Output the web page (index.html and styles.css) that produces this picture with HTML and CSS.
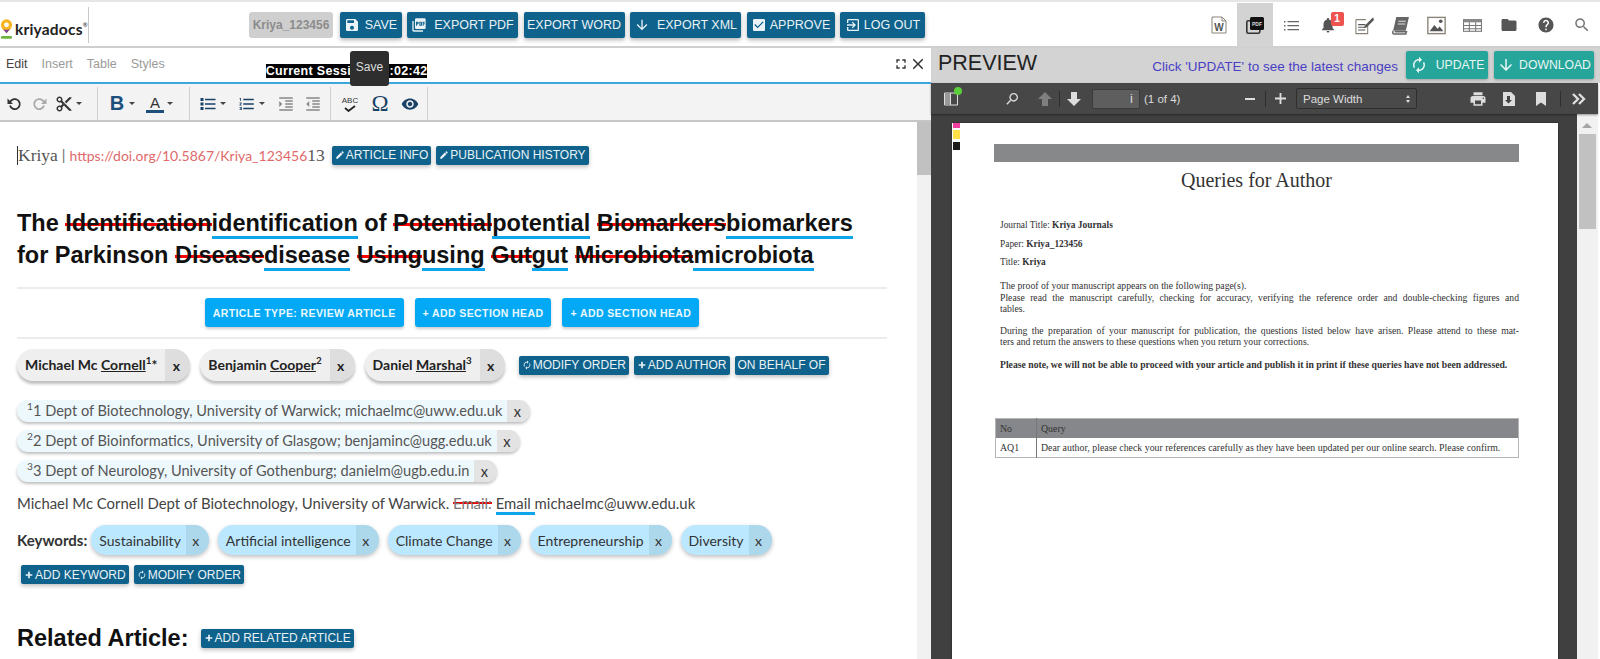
FILE: index.html
```html
<!DOCTYPE html>
<html lang="en">
<head>
<meta charset="utf-8">
<title>Kriyadocs editor</title>
<link rel="stylesheet" href="styles.css">
</head>
<body>
<svg class="sprite" aria-hidden="true">
  <symbol id="i-save" viewBox="0 0 24 24"><path d="M17 3H5c-1.11 0-2 .9-2 2v14c0 1.1.89 2 2 2h14c1.1 0 2-.9 2-2V7l-4-4zm-5 16c-1.66 0-3-1.34-3-3s1.34-3 3-3 3 1.34 3 3-1.34 3-3 3zm3-10H5V5h10v4z"/></symbol>
  <symbol id="i-pdf" viewBox="0 0 24 24"><path d="M20 2H8c-1.1 0-2 .9-2 2v12c0 1.1.9 2 2 2h12c1.1 0 2-.9 2-2V4c0-1.1-.9-2-2-2zm-8.5 7.5c0 .83-.67 1.5-1.5 1.5H9v2H7.5V7H10c.83 0 1.5.67 1.5 1.5v1zm5 2c0 .83-.67 1.5-1.5 1.5h-2.5V7H15c.83 0 1.5.67 1.5 1.5v3zm4-3H19v1h1.5V11H19v2h-1.5V7h3v1.5zM9 9.5h1v-1H9v1zM4 6H2v14c0 1.1.9 2 2 2h14v-2H4V6zm10 5.5h1v-3h-1v3z"/></symbol>
  <symbol id="i-down" viewBox="0 0 24 24"><path d="M20 12l-1.41-1.41L13 16.17V4h-2v12.17l-5.58-5.59L4 12l8 8 8-8z"/></symbol>
  <symbol id="i-check" viewBox="0 0 24 24"><path d="M19 3H5c-1.11 0-2 .9-2 2v14c0 1.1.89 2 2 2h14c1.11 0 2-.9 2-2V5c0-1.1-.89-2-2-2zm-9 14l-5-5 1.41-1.41L10 14.17l7.59-7.59L19 8l-9 9z"/></symbol>
  <symbol id="i-exit" viewBox="0 0 24 24"><path d="M10.09 15.59L11.5 17l5-5-5-5-1.41 1.41L12.67 11H3v2h9.67l-2.58 2.59zM19 3H5c-1.11 0-2 .9-2 2v4h2V5h14v14H5v-4H3v4c0 1.1.89 2 2 2h14c1.1 0 2-.9 2-2V5c0-1.1-.9-2-2-2z"/></symbol>
  <symbol id="i-loop" viewBox="0 0 24 24"><path d="M12 6v3l4-4-4-4v3c-4.42 0-8 3.58-8 8 0 1.57.46 3.03 1.24 4.26L6.7 14.8c-.45-.83-.7-1.79-.7-2.8 0-3.31 2.69-6 6-6zm6.76 1.74L17.3 9.2c.44.84.7 1.79.7 2.8 0 3.31-2.69 6-6 6v-3l-4 4 4 4v-3c4.42 0 8-3.58 8-8 0-1.57-.46-3.03-1.24-4.26z"/></symbol>
  <symbol id="i-edit" viewBox="0 0 24 24"><path d="M3 17.25V21h3.75L17.81 9.94l-3.75-3.75L3 17.25zM20.71 7.04c.39-.39.39-1.02 0-1.41l-2.34-2.34c-.39-.39-1.02-.39-1.41 0l-1.83 1.83 3.75 3.75 1.83-1.83z"/></symbol>
  <symbol id="i-add" viewBox="0 0 24 24"><path d="M20 14h-6v6h-4v-6H4v-4h6V4h4v6h6v4z"/></symbol>
  <symbol id="i-cut" viewBox="0 0 24 24"><path d="M9.64 7.64c.23-.5.36-1.05.36-1.64 0-2.21-1.79-4-4-4S2 3.79 2 6s1.79 4 4 4c.59 0 1.14-.13 1.64-.36L10 12l-2.36 2.36C7.14 14.13 6.59 14 6 14c-2.21 0-4 1.79-4 4s1.79 4 4 4 4-1.79 4-4c0-.59-.13-1.14-.36-1.64L12 14l7 7h3v-1L9.64 7.64zM6 8c-1.1 0-2-.89-2-2s.9-2 2-2 2 .89 2 2-.9 2-2 2zm0 12c-1.1 0-2-.89-2-2s.9-2 2-2 2 .89 2 2-.9 2-2 2zm6-7.5c-.28 0-.5-.22-.5-.5s.22-.5.5-.5.5.22.5.5-.22.5-.5.5zM19 3l-6 6 2 2 7-7V3z"/></symbol>
  <symbol id="i-ul" viewBox="0 0 24 24"><path d="M2 4h4v4H2zM2 10h4v4H2zM2 16h4v4H2zM8 5h14v2H8zM8 11h14v2H8zM8 17h14v2H8z"/></symbol>
  <symbol id="i-ol" viewBox="0 0 24 24"><path d="M2 17h2v.5H3v1h1v.5H2v1h3v-4H2v1zm1-9h1V4H2v1h1v3zm-1 3h1.8L2 13.1v.9h3v-1H3.2L5 10.9V10H2v1zm5-6v2h14V5H7zm0 14h14v-2H7v2zm0-6h14v-2H7v2z"/></symbol>
  <symbol id="i-indent" viewBox="0 0 24 24"><path d="M3 21h18v-2H3v2zM3 8v8l4-4-4-4zm8 9h10v-2H11v2zM3 3v2h18V3H3zm8 6h10V7H11v2zm0 4h10v-2H11v2z"/></symbol>
  <symbol id="i-outdent" viewBox="0 0 24 24"><path d="M11 17h10v-2H11v2zm-8-5l4 4V8l-4 4zm0 9h18v-2H3v2zM3 3v2h18V3H3zm8 6h10V7H11v2zm0 4h10v-2H11v2z"/></symbol>
  <symbol id="i-eye" viewBox="0 0 24 24"><path d="M12 4.5C7 4.5 2.73 7.61 1 12c1.73 4.39 6 7.5 11 7.5s9.27-3.11 11-7.5c-1.73-4.39-6-7.5-11-7.5zM12 17c-2.76 0-5-2.24-5-5s2.24-5 5-5 5 2.24 5 5-2.24 5-5 5zm0-8c-1.66 0-3 1.34-3 3s1.34 3 3 3 3-1.34 3-3-1.34-3-3-3z"/></symbol>
  <symbol id="i-bell" viewBox="0 0 24 24"><path d="M12 22c1.1 0 2-.9 2-2h-4c0 1.1.89 2 2 2zm6-6v-5c0-3.07-1.64-5.64-4.5-6.32V4c0-.83-.67-1.5-1.5-1.5s-1.5.67-1.5 1.5v.68C7.63 5.36 6 7.92 6 11v5l-2 2v1h16v-1l-2-2z"/></symbol>
  <symbol id="i-folder" viewBox="0 0 24 24"><path d="M10 4H4c-1.1 0-1.99.9-1.99 2L2 18c0 1.1.9 2 2 2h16c1.1 0 2-.9 2-2V8c0-1.1-.9-2-2-2h-8l-2-2z"/></symbol>
  <symbol id="i-help" viewBox="0 0 24 24"><path d="M12 2C6.48 2 2 6.48 2 12s4.48 10 10 10 10-4.48 10-10S17.52 2 12 2zm1 17h-2v-2h2v2zm2.07-7.75l-.9.92C13.45 12.9 13 13.5 13 15h-2v-.5c0-1.1.45-2.1 1.17-2.83l1.24-1.26c.37-.36.59-.86.59-1.41 0-1.1-.9-2-2-2s-2 .9-2 2H8c0-2.21 1.79-4 4-4s4 1.79 4 4c0 .88-.36 1.68-.93 2.25z"/></symbol>
  <symbol id="i-search" viewBox="0 0 24 24"><path d="M15.5 14h-.79l-.28-.27C15.41 12.59 16 11.11 16 9.5 16 5.91 13.09 3 9.5 3S3 5.91 3 9.5 5.91 16 9.5 16c1.61 0 3.09-.59 4.23-1.57l.27.28v.79l5 4.99L20.49 19l-4.99-5zm-6 0C7.01 14 5 11.99 5 9.5S7.01 5 9.5 5 14 7.01 14 9.5 11.99 14 9.5 14z"/></symbol>
  <symbol id="i-print" viewBox="0 0 24 24"><path d="M19 8H5c-1.66 0-3 1.34-3 3v6h4v4h12v-4h4v-6c0-1.66-1.34-3-3-3zm-3 11H8v-5h8v5zm3-7c-.55 0-1-.45-1-1s.45-1 1-1 1 .45 1 1-.45 1-1 1zm-1-9H6v4h12V3z"/></symbol>
  <symbol id="i-full" viewBox="0 0 24 24"><path d="M7 14H5v5h5v-2H7v-3zm-2-4h2V7h3V5H5v5zm12 7h-3v2h5v-5h-2v3zM14 5v2h3v3h2V5h-5z"/></symbol>
  <symbol id="i-close" viewBox="0 0 24 24"><path d="M19 6.41L17.59 5 12 10.59 6.41 5 5 6.41 10.59 12 5 17.59 6.41 19 12 13.41 17.59 19 19 17.59 13.41 12z"/></symbol>
</svg>

<div class="app">
  <div class="topstrip"></div>
  <header class="topbar">
    <div class="logo">
      <svg class="logo-pin" viewBox="0 0 14 24">
        <path d="M7 1a6 6 0 0 1 6 6c0 2-1 3.4-2 4.6L7 16 3 11.6C2 10.4 1 9 1 7a6 6 0 0 1 6-6z" fill="#f7b520"/>
        <path d="M2 10c1 1.6 3 2.4 5 2.4s4-.8 5-2.4l-5 6z" fill="#7b3fa0"/>
        <circle cx="7" cy="7" r="2.6" fill="#fff"/>
        <rect x="1" y="19" width="12" height="3" rx="1.5" fill="#6fb43f"/>
      </svg>
      <span class="logo-text">kriyadocs<sup class="logo-r">®</sup></span>
    </div>
    <div class="actions">
      <span class="idchip">Kriya_123456</span>
      <button class="btn btn-save"><svg class="ic16"><use href="#i-save"/></svg><span>SAVE</span></button>
      <button class="btn btn-pdf"><svg class="ic16"><use href="#i-pdf"/></svg><span>EXPORT PDF</span></button>
      <button class="btn btn-word"><span>EXPORT WORD</span></button>
      <button class="btn btn-xml"><svg class="ic16"><use href="#i-down"/></svg><span>EXPORT XML</span></button>
      <button class="btn btn-approve"><svg class="ic16"><use href="#i-check"/></svg><span>APPROVE</span></button>
      <button class="btn btn-logout"><svg class="ic16"><use href="#i-exit"/></svg><span>LOG OUT</span></button>
    </div>
    <nav class="navicons">
      <span class="nav nav-w"><svg class="doc-w" viewBox="0 0 16 18"><path d="M1 1h10l4 4v12H1z" fill="#fff" stroke="#8a8478"/><path d="M11 1v4h4" fill="none" stroke="#8a8478"/><text x="8" y="14.5" text-anchor="middle" class="doc-w-t">W</text></svg></span>
      <span class="nav nav-active"><svg class="pdf-stack" viewBox="0 0 18 17"><rect x="0.8" y="3.8" width="13" height="12.4" rx="1.5" fill="none" stroke="#333" stroke-width="1.6"/><rect x="4" y="0" width="14" height="13" rx="1.5" fill="#111"/><text x="11" y="9" text-anchor="middle" class="pdf-t">PDF</text></svg></span>
      <span class="nav"><svg class="listic" viewBox="0 0 15 11"><path d="M0 1h1.500v1.500H0zM0 5h1.500v1.500H0zM0 9h1.500v1.500H0zM3.500 1H15v1.300H3.500zM3.500 5H15v1.300H3.500zM3.500 9H15v1.300H3.500z"/></svg></span>
      <span class="nav nav-bell"><svg class="ic18 dim"><use href="#i-bell"/></svg><b class="badge">1</b></span>
      <span class="nav"><svg class="navsvg" viewBox="0 0 21 20"><path d="M1 3.500h11M1 3.500V19h13V9" fill="none" stroke="#8a8478" stroke-width="1.200"/><path d="M3.500 9h8M3.500 12h8M3.500 15h8" stroke="#555" stroke-width="1.200"/><path d="M20 1l-9 9-1 3 3-1 8-8z" fill="#555"/></svg></span>
      <span class="nav"><svg class="navsvg" viewBox="0 0 18 18"><path d="M5 1h12l-3 13H2z" fill="#666"/><path d="M2 14c-1 2 0 3 1 3h11l.6-2H3.500" fill="none" stroke="#666" stroke-width="1.400"/><path d="M7 5h7M6.500 7.500h7" stroke="#ddd"/></svg></span>
      <span class="nav"><svg class="navsvg" viewBox="0 0 18 17"><rect x="0.800" y="0.800" width="16.400" height="15.400" fill="#fff" stroke="#8a8478" stroke-width="1.300"/><path d="M2.500 14l4.500-6 3 3.500 2-2 3.500 4.500z" fill="#555"/><circle cx="13" cy="4.500" r="1.700" fill="#555"/></svg></span>
      <span class="nav"><svg class="navsvg" viewBox="0 0 18 12"><rect x="0.500" y="0.500" width="17" height="11" fill="#fff" stroke="#777"/><rect x="0.500" y="0.500" width="17" height="2.500" fill="#888"/><path d="M6 3v8.500M12 3v8.500M0.500 6h17M0.500 9h17" stroke="#777"/></svg></span>
      <span class="nav"><svg class="ic18 dim2"><use href="#i-folder"/></svg></span>
      <span class="nav"><svg class="ic18 dim2"><use href="#i-help"/></svg></span>
      <span class="nav"><svg class="ic18 dim3"><use href="#i-search"/></svg></span>
    </nav>
  </header>

  <main class="main">
    <section class="editor">
      <div class="tabs">
        <span class="tab tab-on">Edit</span>
        <span class="tab">Insert</span>
        <span class="tab">Table</span>
        <span class="tab">Styles</span>
        <span class="session">Current Session: 00:02:42</span>
        <span class="tabtools">
          <svg class="ic16"><use href="#i-full"/></svg>
          <svg class="ic18"><use href="#i-close"/></svg>
        </span>
        <div class="tooltip">Save</div>
      </div>

      <div class="toolbar">
        <div class="tgroup tg1">
          <span class="tool"><svg class="ic16" viewBox="0 0 16 16"><path d="M4 9.500a5 5 0 1 0 1.600-5.200L3 6.500" fill="none" stroke="#333" stroke-width="1.800"/><path d="M1.500 2.500v5.500H7z" fill="#333"/></svg></span>
          <span class="tool off"><svg class="ic16" viewBox="0 0 16 16"><path d="M12 9.500a5 5 0 1 1-1.600-5.200L13 6.500" fill="none" stroke="#aaa" stroke-width="1.800"/><path d="M14.500 2.500v5.500H9z" fill="#aaa"/></svg></span>
          <span class="tool tool-wide"><svg class="ic18"><use href="#i-cut"/></svg><i class="caret"></i></span>
        </div>
        <div class="tgroup tg2">
          <span class="tool tool-wide"><b class="tb">B</b><i class="caret"></i></span>
          <span class="tool tool-wide"><span class="ta">A</span><i class="caret"></i></span>
        </div>
        <div class="tgroup tg3">
          <span class="tool tool-wide w39"><svg class="ic18 navy"><use href="#i-ul"/></svg><i class="caret"></i></span>
          <span class="tool tool-wide w34"><svg class="ic18 navy"><use href="#i-ol"/></svg><i class="caret"></i></span>
          <span class="tool w27"><svg class="ic18 grey"><use href="#i-indent"/></svg></span>
          <span class="tool w27"><svg class="ic18 grey"><use href="#i-outdent"/></svg></span>
        </div>
        <div class="tgroup tg4">
          <span class="tool w30"><span class="abc"><small class="abc-t">ABC</small><svg class="abc-c" viewBox="0 0 12 7"><path d="M1 3l3.500 3L11 1" fill="none" stroke="#222" stroke-width="1.800"/></svg></span></span>
          <span class="tool w30"><span class="omega">Ω</span></span>
          <span class="tool w30"><svg class="ic18 navy"><use href="#i-eye"/></svg></span>
        </div>
      </div>

      <div class="docwrap">
        <div class="doc">
          <div class="docline">
            <span class="caretbar"></span><span class="serif">Kriya</span><span class="pipe">|</span><a class="doi">https://doi.org/10.5867/Kriya_123456</a><span class="serif">13</span>
            <button class="mini mini-info"><svg class="ic10"><use href="#i-edit"/></svg>ARTICLE INFO</button>
            <button class="mini"><svg class="ic10"><use href="#i-edit"/></svg>PUBLICATION HISTORY</button>
          </div>

          <h1 class="title">The <del>Identification</del><ins>identification</ins> of <del>Potential</del><ins>potential</ins> <del>Biomarkers</del><ins>biomarkers</ins> for Parkinson <del>Disease</del><ins>disease</ins> <del>Using</del><ins>using</ins> <del>Gut</del><ins>gut</ins> <del>Microbiota</del><ins>microbiota</ins></h1>

          <div class="sectionbtns">
            <button class="sb">ARTICLE TYPE: REVIEW ARTICLE</button>
            <button class="sb">+ ADD SECTION HEAD</button>
            <button class="sb">+ ADD SECTION HEAD</button>
          </div>

          <div class="authors">
            <span class="chip chip-author"><span class="chip-t">Michael Mc <u>Cornell</u><sup>1</sup>*</span><span class="chip-x">x</span></span>
            <span class="chip chip-author"><span class="chip-t">Benjamin <u>Cooper</u><sup>2</sup></span><span class="chip-x">x</span></span>
            <span class="chip chip-author"><span class="chip-t">Daniel <u>Marshal</u><sup>3</sup></span><span class="chip-x">x</span></span>
            <span class="minis">
              <button class="mini"><svg class="ic10"><use href="#i-loop"/></svg>MODIFY ORDER</button>
              <button class="mini"><svg class="ic10"><use href="#i-add"/></svg>ADD AUTHOR</button>
              <button class="mini">ON BEHALF OF</button>
            </span>
          </div>

          <div class="affs">
            <span class="chip chip-aff"><span class="chip-t"><sup>1</sup>1 Dept of Biotechnology, University of Warwick; michaelmc@uww.edu.uk</span><span class="chip-x">x</span></span>
            <span class="chip chip-aff"><span class="chip-t"><sup>2</sup>2 Dept of Bioinformatics, University of Glasgow; benjaminc@ugg.edu.uk</span><span class="chip-x">x</span></span>
            <span class="chip chip-aff"><span class="chip-t"><sup>3</sup>3 Dept of Neurology, University of Gothenburg; danielm@ugb.edu.in</span><span class="chip-x">x</span></span>
          </div>

          <p class="corr">Michael Mc Cornell Dept of Biotechnology, University of Warwick. <del class="thin">Email:</del> <ins class="thin">Email </ins>michaelmc@uww.edu.uk</p>

          <div class="keywords">
            <b class="kw-label">Keywords:</b>
            <span class="chip chip-kw"><span class="chip-t">Sustainability</span><span class="chip-x">x</span></span>
            <span class="chip chip-kw"><span class="chip-t">Artificial intelligence</span><span class="chip-x">x</span></span>
            <span class="chip chip-kw"><span class="chip-t">Climate Change</span><span class="chip-x">x</span></span>
            <span class="chip chip-kw"><span class="chip-t">Entrepreneurship</span><span class="chip-x">x</span></span>
            <span class="chip chip-kw"><span class="chip-t">Diversity</span><span class="chip-x">x</span></span>
          </div>

          <div class="kwbtns">
            <button class="mini"><svg class="ic10"><use href="#i-add"/></svg>ADD KEYWORD</button>
            <button class="mini"><svg class="ic10"><use href="#i-loop"/></svg>MODIFY ORDER</button>
          </div>

          <div class="related">
            <span class="rel-t">Related Article:</span>
            <button class="mini"><svg class="ic10"><use href="#i-add"/></svg>ADD RELATED ARTICLE</button>
          </div>
        </div>
        <div class="scroll-left"><div class="thumb-left"></div></div>
      </div>
    </section>

    <section class="preview">
      <div class="pv-head">
        <span class="pv-title">PREVIEW</span>
        <span class="pv-msg">Click 'UPDATE' to see the latest changes</span>
        <button class="teal teal-up"><svg class="ic18"><use href="#i-loop"/></svg><span>UPDATE</span></button>
        <button class="teal teal-dl"><svg class="ic18"><use href="#i-down"/></svg><span>DOWNLOAD</span></button>
      </div>
      <div class="pdfbar">
        <span class="sidebar-ic"><svg class="ic-side" viewBox="0 0 14 14"><path d="M0.500 1h13v12H0.500z" fill="none" stroke="#ddd"/><rect x="1" y="1.500" width="5" height="11" fill="#999"/><path d="M6.500 1v12" stroke="#ddd"/></svg><i class="greendot"></i></span>
        <svg class="ic16 pb-search light"><use href="#i-search"/></svg>
        <svg class="pb-arrow pb-up" viewBox="0 0 14 14"><path d="M7 0l7 7H10v7H4V7H0z"/></svg>
        <i class="pb-sep"></i>
        <svg class="pb-arrow pb-dn" viewBox="0 0 14 14"><path d="M7 14L0 7h4V0h6v7h4z"/></svg>
        <span class="pb-input">i</span>
        <span class="pb-count">(1 of 4)</span>
        <span class="pb-minus"></span>
        <i class="pb-sep sep-z"></i>
        <svg class="pb-plus" viewBox="0 0 12 12"><path d="M5 0h2v5h5v2H7v5H5V7H0V5h5z"/></svg>
        <span class="pb-select">Page Width<span class="updown"><i></i><i></i></span></span>
        <svg class="ic18 pb-print light"><use href="#i-print"/></svg>
        <svg class="pb-docdl" viewBox="0 0 12 14"><path d="M0 0h8l4 4v10H0z" fill="#ddd"/><path d="M4 4h3v4h2l-3.500 3.500L2 8h2z" fill="#444"/></svg>
        <svg class="pb-mark" viewBox="0 0 10 14"><path d="M0 0h10v14L5 10.500 0 14z" fill="#ddd"/></svg>
        <i class="pb-sep sep-r"></i>
        <svg class="pb-more" viewBox="0 0 14 12"><path d="M1 1l5 5-5 5M7 1l5 5-5 5" fill="none" stroke="#ddd" stroke-width="2.400"/></svg>
      </div>
      <div class="viewer">
        <div class="pages">
          <article class="page">
            <i class="mark mark-m"></i><i class="mark mark-y"></i><i class="mark mark-k"></i>
            <div class="greybar"></div>
            <h2 class="q-title">Queries for Author</h2>
            <p class="q-meta first">Journal Title: <b>Kriya Journals</b></p>
            <p class="q-meta">Paper: <b>Kriya_123456</b></p>
            <p class="q-meta">Title: <b>Kriya</b></p>
            <p class="q-p q-gap">The proof of your manuscript appears on the following page(s).</p>
            <p class="q-p"><span class="jl">Please read the manuscript carefully, checking for accuracy, verifying the reference order and double-checking figures and</span> tables.</p>
            <p class="q-p q-gap2"><span class="jl">During the preparation of your manuscript for publication, the questions listed below have arisen. Please attend to these mat-</span> ters and return the answers to these questions when you return your corrections.</p>
            <p class="q-p q-gap3"><b>Please note, we will not be able to proceed with your article and publish it in print if these queries have not been addressed.</b></p>
            <table class="q-table">
              <thead><tr><th class="c1">No</th><th>Query</th></tr></thead>
              <tbody><tr><td>AQ1</td><td>Dear author, please check your references carefully as they have been updated per our online search. Please confirm.</td></tr></tbody>
            </table>
          </article>
        </div>
        <div class="scroll-right"><i class="sc-up"></i><div class="thumb-right"></div></div>
      </div>
    </section>
  </main>
</div>
</body>
</html>
```

FILE: styles.css
```css
* { box-sizing: border-box; }
html, body { margin: 0; padding: 0; background: #fff; }
body { width: 1600px; height: 659px; overflow: hidden; font-family: "Liberation Sans", Arial, sans-serif; }
button { font-family: inherit; border: 0; cursor: pointer; }
svg { fill: currentColor; flex: none; }
.sprite { display: none; }
.app { display: flex; flex-direction: column; height: 659px; overflow: hidden; }

.topstrip { height: 5px; border-top: 2px solid #e6e6e6; background: #fff; }
.topbar { height: 43px; display: flex; align-items: flex-start; border-bottom: 2px solid #cfcfcf; background: #fff; }

.logo { width: 89px; height: 36px; margin-top: 2px; padding-top: 9px; display: flex; align-items: center; border-right: 1px solid #c8c8c8; gap: 2px; }
.logo-pin { width: 13px; height: 23px; }
.logo-text { font: 700 15.5px/1 "Lato", sans-serif; color: #222; letter-spacing: 0.2px; position: relative; }
.logo-r { font-size: 6px; vertical-align: top; line-height: 1; font-weight: 400; }

.actions { display: flex; align-items: center; margin-left: 160px; gap: 5.5px; height: 26px; margin-top: 7px; }
.idchip { width: 84px; height: 26px; margin-right: 1px; background: #cfcfcf; color: #8c8c8c; font-size: 12px; font-weight: 700; border-radius: 3px; display: flex; align-items: center; justify-content: center; }
.btn { height: 26px; display: flex; align-items: center; justify-content: center; gap: 5px; background: #0f628c; color: #e9f2f6; font-size: 12.5px; border-radius: 2px; padding: 0; box-shadow: 0 2px 4px rgba(0,0,0,.3); }
.btn-save { width: 62px; }
.btn-pdf { width: 111px; gap: 7px; }
.btn-word { width: 101px; }
.btn-xml { width: 111px; gap: 7px; }
.btn-approve { width: 88px; gap: 3px; }
.btn-logout { width: 85px; gap: 3px; }
.ic16 { width: 16px; height: 16px; }
.ic18 { width: 18px; height: 18px; }
.ic14 { width: 14px; height: 14px; }
.ic10 { width: 10px; height: 10px; margin-right: 1px; }

.navicons { margin-left: auto; display: flex; height: 44px; margin-top: -2px; }
.nav { width: 36.3px; height: 44px; display: flex; align-items: center; justify-content: center; position: relative; color: #666; }
.nav-active { background: #d3d3d3; }
.doc-w { width: 16px; height: 18px; }
.doc-w-t { font: 700 10px "Liberation Sans", sans-serif; fill: #555; }
.pdf-stack { width: 18px; height: 17px; }
.pdf-t { font: 700 5px "Liberation Sans", sans-serif; fill: #ddd; }
.listic { width: 15px; height: 11px; fill: #666; }
.navsvg { width: 19px; height: 19px; }
.dim { color: #555; }
.dim2 { color: #555; }
.dim3 { color: #777; }
.badge { position: absolute; top: 9px; left: 21px; width: 13px; height: 14px; background: #ef5350; color: #fff; font-size: 10px; line-height: 14px; text-align: center; border-radius: 2px; }

.main { flex: 1; display: flex; min-height: 0; }

.editor { width: 931px; display: flex; flex-direction: column; position: relative; background: #fff; }
.tabs { height: 36px; display: flex; align-items: center; padding: 0 6px 3px; gap: 14px; border-bottom: 2px solid #3ea6dd; font-size: 12.5px; color: #9a9a9a; position: relative; }
.tab { flex: none; }
.tab-on { color: #444; }
.session { margin-left: 87px; margin-top: 15px; width: 161px; height: 14px; background: #000; color: #fff; font-weight: 700; font-size: 12.5px; line-height: 14px; text-align: center; white-space: nowrap; letter-spacing: 0.3px; }
.tabtools { margin-left: auto; display: flex; align-items: center; gap: 0; margin-right: -2px; color: #333; }
.tooltip { position: absolute; left: 350px; top: 3px; width: 39px; height: 35px; background: #2e2e2e; color: #ddd; font-size: 12px; border-radius: 3px; display: flex; align-items: center; justify-content: center; padding-bottom: 3px; z-index: 3; }

.toolbar { height: 38px; display: flex; background: #f3f3f3; border-bottom: 2px solid #c6c6c6; padding: 3px 0 0; color: #333; }
.tgroup { display: flex; align-items: center; border-right: 1px solid #d0d0d0; height: 100%; }
.tg1 { width: 98px; padding-left: 1px; }
.tg2 { width: 92px; padding-left: 10px; }
.tg3 { width: 141px; padding-left: 9px; }
.tg4 { width: 97px; padding-left: 4px; }
.tool { width: 26px; height: 100%; display: flex; align-items: center; justify-content: center; }
.tool-wide { width: 38px; justify-content: flex-start; gap: 3px; }
.tg1 .tool-wide { padding-left: 2px; }
.w39 { width: 39px; }
.w34 { width: 34px; }
.w27 { width: 27px; }
.w30 { width: 30px; }
.caret { width: 0; height: 0; border-left: 3px solid transparent; border-right: 3px solid transparent; border-top: 3px solid #444; }
.tb { width: 18px; text-align: center; font-size: 20px; color: #1c4f7c; }
.ta { width: 18px; text-align: center; font-size: 15px; color: #333; border-bottom: 3px solid #1c4f7c; line-height: 15px; }
.navy { color: #1a4166; }
.grey { color: #888; }
.abc { display: flex; flex-direction: column; align-items: center; }
.abc-t { font-size: 8px; line-height: 9px; color: #333; }
.abc-c { width: 12px; height: 7px; }
.omega { font: 400 23px/1 "Liberation Serif", serif; color: #1a4166; }

.docwrap { flex: 1; display: flex; min-height: 0; overflow: hidden; }
.doc { width: 917px; padding: 24px 30px 0 17px; overflow: hidden; }
.scroll-left { width: 14px; background: #f1f1f1; }
.thumb-left { height: 53px; background: #c1c1c1; }

.docline { display: flex; align-items: center; height: 18px; color: #666; }
.caretbar { width: 1px; height: 19px; background: #333; }
.serif { font: 400 17.5px "Liberation Serif", serif; color: #555; }
.pipe { margin: 0 4px 0 4px; font-size: 14px; color: #777; }
.doi { font: 400 14px "Lato", sans-serif; color: #e06a6a; }
.docline .mini-info { margin-left: 7px; margin-right: 5px; }

.mini { height: 19px; display: inline-flex; align-items: center; justify-content: center; padding: 0 3px; background: #0f628c; color: #e9f2f6; font-size: 12px; line-height: 1; border-radius: 2px; white-space: nowrap; box-shadow: 0 2px 4px rgba(0,0,0,.25); }

.title { margin: 43px 0 16px; font: 700 23.5px/32px "Liberation Sans", sans-serif; color: #111; }
.title del { text-decoration: none; background: linear-gradient(#f00,#f00) 0 56% / 100% 3px no-repeat; }
.title ins { text-decoration: none; border-bottom: 3px solid #0ea5ea; }
.thin { text-decoration: none; }
del.thin { background: linear-gradient(#e00,#e00) 0 50% / 100% 2px no-repeat; color: #777; }
ins.thin { border-bottom: 3px solid #0ea5ea; }

.sectionbtns { border-top: 2px solid #ececec; border-bottom: 2px solid #ececec; padding: 9px 0; display: flex; justify-content: center; gap: 11px; height: 52px; }
.sb { height: 29px; background: #03a9f4; color: #eaf8fe; font-size: 10.5px; font-weight: 700; letter-spacing: .4px; padding: 0 8px; border-radius: 3px; box-shadow: 0 2px 3px rgba(0,0,0,.2); }

.chip { display: inline-flex; overflow: hidden; align-items: stretch; font-family: "Lato", sans-serif; }
.chip-t { display: flex; align-items: center; white-space: pre; }
.chip-x { display: flex; align-items: center; justify-content: center; }
sup { font-size: 70%; line-height: 0; align-self: flex-start; }

.authors { margin-top: 10px; display: flex; align-items: center; gap: 10px; height: 32px; }
.chip-author { height: 32px; border-radius: 16px; background: #efefef; box-shadow: 0 3px 3px rgba(0,0,0,.25); font-size: 14px; font-weight: 700; color: #222; }
.chip-author .chip-t { padding: 0 8px 0 8px; display: block; line-height: 32px; }
.chip-author .chip-x { width: 25px; background: #dedede; padding-right: 3px; }
.minis { display: flex; gap: 5px; margin-left: 4px; }

.affs { margin-top: 19px; display: flex; flex-direction: column; align-items: flex-start; gap: 8px; }
.chip-aff { height: 22px; border-radius: 11px; background: #edf8fd; box-shadow: 0 2px 3px rgba(0,0,0,.25); font-size: 14.6px; color: #555; }
.chip-aff .chip-t { padding: 0 5px 0 10px; display: block; line-height: 22px; }
.chip-aff .chip-x { width: 23px; background: #e3e3e3; padding-right: 3px; color: #333; }

.corr { margin: 11px 0 0; height: 20px; font: 400 14.9px/20px "Lato", sans-serif; color: #444; white-space: nowrap; }

.keywords { margin-top: 12px; display: flex; align-items: center; gap: 9px; height: 30px; }
.kw-label { font: 700 15px "Lato", sans-serif; color: #333; margin-right: -5px; }
.chip-kw { height: 30px; border-radius: 15px; background: #bbe8fe; box-shadow: 0 2px 4px rgba(0,0,0,.25); font-size: 14px; color: #333; }
.chip-kw .chip-t { padding: 0 5px 0 8px; }
.chip-kw .chip-x { width: 23px; background: #add8ec; padding-right: 3px; }

.kwbtns { margin: 10px 0 0 4px; display: flex; gap: 5px; }

.related { margin-top: 39px; display: flex; align-items: center; gap: 12px; height: 30px; }
.rel-t { font: 700 23.5px/30px "Liberation Sans", sans-serif; color: #111; }

.preview { flex: 1; display: flex; flex-direction: column; min-width: 0; background: #fff; }
.pv-head { height: 35px; background: #d3d3d3; display: flex; align-items: center; padding: 0 6px 0 7px; position: relative; }
.pv-title { font-size: 21.5px; line-height: 24px; color: #222; margin-bottom: 6px; }
.pv-msg { margin-left: auto; margin-right: 8px; font-size: 13.5px; color: #4a3fc4; margin-top: 2px; }
.teal { height: 28px; background: #26a69a; color: #e8f6f4; font-size: 12.2px; display: flex; align-items: center; justify-content: center; border-radius: 2px; gap: 8px; padding: 0; box-shadow: 0 1px 3px rgba(0,0,0,.25); margin-bottom: 1px; }
.teal-up { width: 82px; }
.teal-dl { width: 100px; margin-left: 6px; gap: 4px; }

.pdfbar { height: 31px; margin-right: 2px; background: #474747; display: flex; align-items: center; color: #ddd; padding-left: 13px; box-shadow: 0 1px 2px rgba(0,0,0,.4); position: relative; z-index: 1; }
.sidebar-ic { position: relative; width: 14px; height: 14px; display: block; }
.ic-side { width: 14px; height: 14px; display: block; }
.greendot { position: absolute; top: -5px; right: -4px; width: 8px; height: 8px; background: #5bcf3b; border-radius: 50%; }
.light { color: #ddd; }
.pb-search { margin-left: 46px; transform: scaleX(-1); }
.pb-arrow { width: 14px; height: 14px; }
.pb-up { margin-left: 18px; fill: #7f7f7f; }
.pb-dn { margin-left: 7px; fill: #ddd; }
.pb-sep { width: 1px; height: 16px; background: #2e2e2e; margin-left: 7px; }
.pb-input { margin-left: 11px; width: 48px; height: 20px; background: #5e5e5e; border: 1px solid #3a3a3a; border-radius: 2px; font-size: 13px; line-height: 18px; text-align: right; padding-right: 6px; }
.pb-count { margin-left: 4px; width: 36px; font-size: 11.5px; white-space: nowrap; }
.pb-minus { margin-left: 65px; width: 10px; height: 2px; background: #ddd; }
.sep-z { margin-left: 10px; }
.pb-plus { margin-left: 9px; width: 11px; height: 11px; fill: #ddd; }
.pb-select { margin-left: 10px; width: 121px; height: 21px; background: #4a4a4a; border: 1px solid #2f2f2f; border-radius: 2px; font-size: 11.5px; display: flex; align-items: center; justify-content: space-between; padding: 0 6px; }
.updown { display: flex; flex-direction: column; gap: 2px; }
.updown i { width: 0; height: 0; border-left: 2.5px solid transparent; border-right: 2.5px solid transparent; border-bottom: 3px solid #ddd; }
.updown i + i { border-bottom: 0; border-top: 3px solid #ddd; }
.pb-print { margin-left: 52px; }
.pb-docdl { margin-left: 16px; width: 12px; height: 14px; }
.pb-mark { margin-left: 21px; width: 10px; height: 14px; }
.sep-r { margin-left: 14px; }
.pb-more { margin-left: 11px; width: 14px; height: 12px; }

.viewer { flex: 1; margin-right: 2px; display: flex; min-height: 0; background: #404040; overflow: hidden; }
.pages { flex: 1; padding: 9px 0 0 21px; }
.page { width: 606px; height: 900px; background: #fff; position: relative; padding: 21px 0 0 42px; color: #333; font-family: "Liberation Serif", serif; box-shadow: 0 0 2px rgba(0,0,0,.5); }
.mark { position: absolute; left: 1px; width: 7px; display: block; }
.mark-m { top: 0; height: 5px; background: #ef3fa0; }
.mark-y { top: 7px; height: 9px; background: #fde047; }
.mark-k { top: 19px; height: 8px; background: #1a1a1a; }
.greybar { width: 525px; height: 18px; background: #87888a; }
.q-title { margin: 6px 0 0; width: 525px; text-align: center; font: 400 20px/24px "Liberation Serif", serif; color: #333; }
.q-p, .q-meta { margin: 0; width: 519px; margin-left: 6px; font-size: 9.7px; line-height: 11.7px; text-align: justify; }
.jl { display: block; text-align-last: justify; white-space: nowrap; }
.q-meta { font-size: 9.4px; line-height: 12px; margin-top: 6.500px; }
.q-meta.first { margin-top: 27px; }
.q-gap { margin-top: 12px; }
.q-gap2 { margin-top: 9.500px; }
.q-gap3 { margin-top: 11px; }
.q-table { margin-top: 47px; margin-left: 1px; width: 524px; border-collapse: collapse; font-size: 9.85px; border: 1px solid #b5b5b5; }
.q-table th { background: #86878a; height: 20px; text-align: left; font-weight: 400; padding: 0 4px; color: #333; }
.q-table .c1 { width: 41px; }
.q-table td { height: 19px; padding: 0 4px; white-space: nowrap; }
.q-table th + th, .q-table td + td { border-left: 1px solid #777; }

.scroll-right { width: 21px; background: #f1f1f1; position: relative; padding-top: 20px; }
.sc-up { position: absolute; top: 9px; left: 5px; width: 0; height: 0; border-left: 5px solid transparent; border-right: 5px solid transparent; border-bottom: 5px solid #a5a5a5; }
.thumb-right { height: 95px; margin: 0 2px; background: #c1c1c1; }
```
